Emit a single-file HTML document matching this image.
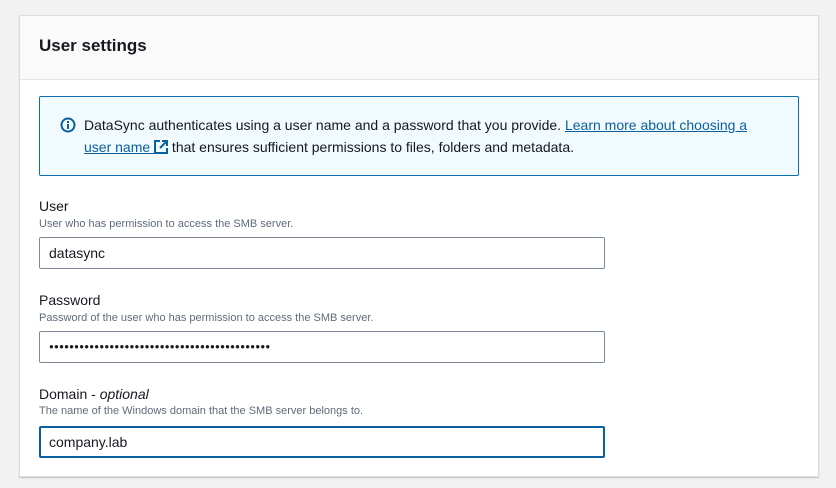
<!DOCTYPE html>
<html><head><style>
*{box-sizing:border-box;margin:0;padding:0}
body{width:836px;height:488px;background:#f2f2f2;font-family:"Liberation Sans",sans-serif;color:#16191f;position:relative;overflow:hidden}
.card{position:absolute;left:19px;top:15px;width:800px;height:462px;background:#fff;border:1px solid #dcdcdc;box-shadow:0 1px 1px rgba(0,0,0,.2)}
.hdr{height:64px;background:#fafafa;border-bottom:1px solid #e6e6e6;padding:20px 0 0 19px;font-size:17px;font-weight:bold}
.info{position:absolute;left:19px;top:80px;width:760px;height:80px;background:#f1faff;border:1px solid #0a6fb0;border-radius:2px;padding:17px 0 0 44px;font-size:14px;line-height:22px;color:#16191f}
.info a{color:#0a5f9e;text-decoration:underline}
.ic{position:absolute;left:20px;top:20px}
.lab{position:absolute;left:19px;font-size:14px}
.desc{position:absolute;left:19px;font-size:11px;color:#5f6b7a}
.inp{position:absolute;left:19px;width:566px;height:32px;border:1px solid #7d8998;border-radius:2px;font-size:14px;padding:7px 0 0 9px}
.foc{border:2px solid #0a5f9e;padding:6px 0 0 8px}
</style></head><body>
<div class="card">
<div class="hdr">User settings</div>
<div class="info"><svg class="ic" width="16" height="16" viewBox="0 0 16 16"><circle cx="8" cy="8" r="6.5" fill="none" stroke="#0a5f9e" stroke-width="2"/><rect x="7" y="7" width="2" height="5" fill="#0a5f9e"/><rect x="7" y="4" width="2" height="2" fill="#0a5f9e"/></svg>DataSync authenticates using a user name and a password that you provide. <a>Learn more about choosing a<br>user name <svg width="14" height="14" viewBox="0 0 14 14" style="vertical-align:-2px"><path d="M6 1H1V13H13V8" fill="none" stroke="#0a5f9e" stroke-width="2"/><path d="M8 1H13V6M13 1L6 8" fill="none" stroke="#0a5f9e" stroke-width="2"/></svg></a> that ensures sufficient permissions to files, folders and metadata.</div>
<div class="lab" style="top:182px">User</div>
<div class="desc" style="top:202px">User who has permission to access the SMB server.</div>
<div class="inp" style="top:221px">datasync</div>
<div class="lab" style="top:276px">Password</div>
<div class="desc" style="top:296px">Password of the user who has permission to access the SMB server.</div>
<div class="inp" style="top:315px;font-size:8px;padding-top:10px;letter-spacing:0.2px">●●●●●●●●●●●●●●●●●●●●●●●●●●●●●●●●●●●●●●●●●●●●</div>
<div class="lab" style="top:370px">Domain - <i>optional</i></div>
<div class="desc" style="top:389px">The name of the Windows domain that the SMB server belongs to.</div>
<div class="inp foc" style="top:410px">company.lab</div>
</div>
</body></html>
